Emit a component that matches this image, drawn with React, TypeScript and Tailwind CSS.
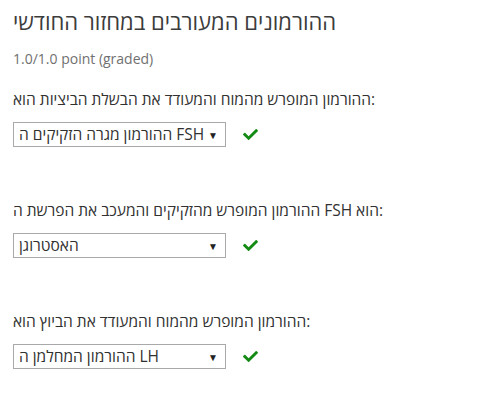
import React from "react";
import { FaCheck } from "react-icons/fa";

type Question = {
  id: number;
  label: string;
  answer: string;
};

const questions: Question[] = [
  {
    id: 1,
    label: "ההורמון המופרש מהמוח והמעודד את הבשלת הביציות הוא:",
    answer: "ההורמון מגרה הזקיקים ה FSH",
  },
  {
    id: 2,
    label: "ההורמון המופרש מהזקיקים והמעכב את הפרשת ה FSH הוא:",
    answer: "האסטרוגן",
  },
  {
    id: 3,
    label: "ההורמון המופרש מהמוח והמעודד את הביוץ הוא:",
    answer: "ההורמון המחלמן ה LH",
  },
];

const FakeSelect = ({ value }: { value: string }) => (
  <div className="flex items-center justify-between w-[213px] h-[25px] border border-[#a9a9a9] bg-white pl-[5px] pr-[7px]">
    <span className="text-[15.5px] leading-none text-[#313131] whitespace-nowrap" dir="ltr">
      {value}
    </span>
    <span className="text-[10px] leading-none text-[#222]">▼</span>
  </div>
);

const QuestionRow = ({ q }: { q: Question }) => (
  <div className="flex flex-col">
    <p className="text-[15.5px] leading-[22px] text-[#313131] h-[22px]">{q.label}</p>
    <div className="flex items-center mt-[12px] gap-[16px]">
      <FakeSelect value={q.answer} />
      <FaCheck className="text-[#138a13] w-[17px] h-[15px]" />
    </div>
  </div>
);

export default function App() {
  return (
    <div
      className="w-[479px] h-[410px] bg-white pl-[13px] pt-[6px] overflow-hidden"
      style={{ fontFamily: '"Open Sans", "Liberation Sans", sans-serif' }}
      dir="ltr"
    >
      <h2 className="text-[22px] leading-[30px] text-[#3c3c3c] font-normal">
        ההורמונים המעורבים במחזור החודשי
      </h2>
      <div className="mt-[14px] text-[14px] leading-[18px] text-[#707070]">
        1.0/1.0 point (graded)
      </div>
      <div className="flex flex-col gap-[52px] mt-[20px]">
        {questions.map((q) => (
          <QuestionRow key={q.id} q={q} />
        ))}
      </div>
    </div>
  );
}
